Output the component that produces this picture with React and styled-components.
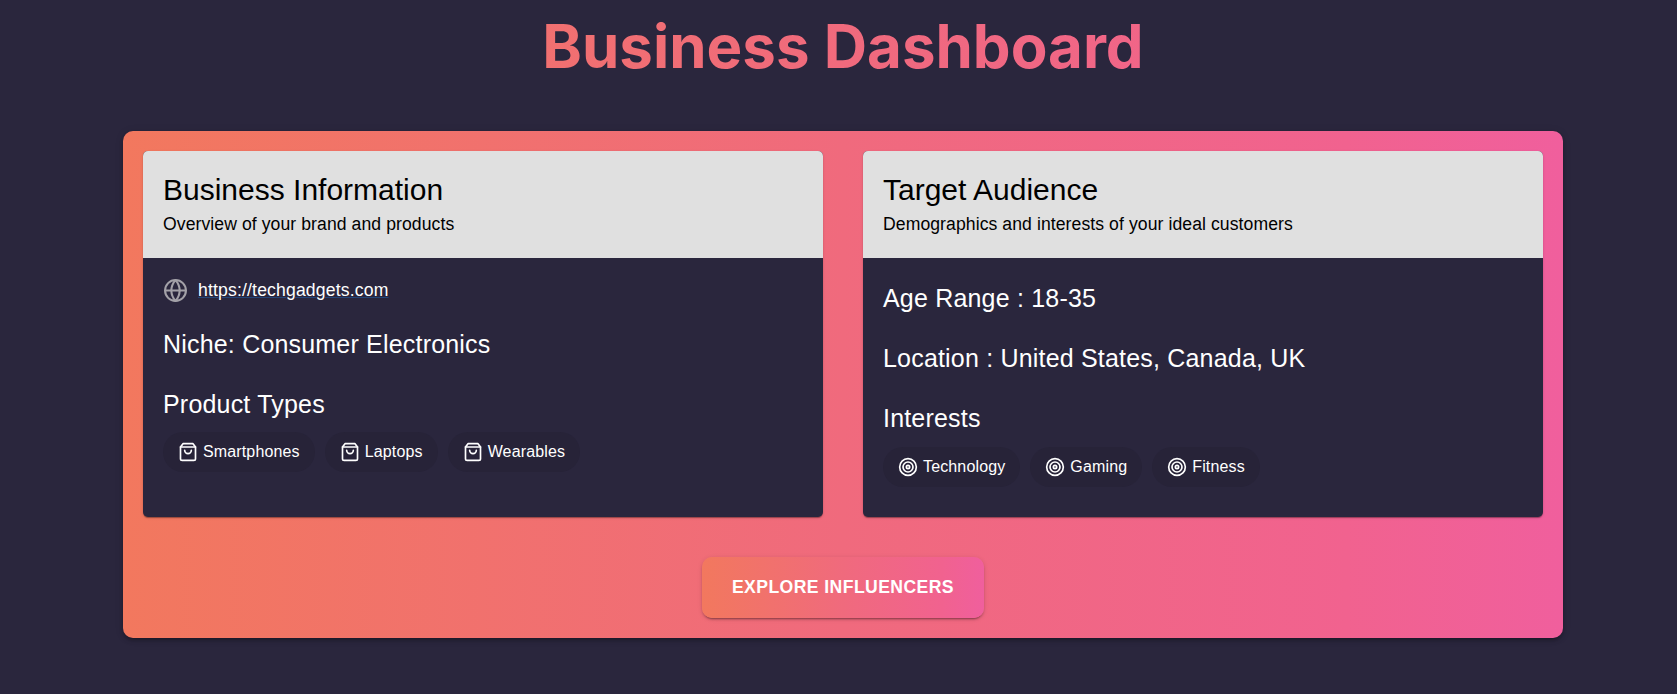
import React from "react";
import styled, { createGlobalStyle } from "styled-components";

const gradient = "linear-gradient(90deg, #f2785e 0%, #f06a7d 50%, #f1628f 85%, #f05f9d 100%)";
const sans = '"Liberation Sans", Arial, Helvetica, sans-serif';

const GlobalStyle = createGlobalStyle`
  *, *::before, *::after { box-sizing: border-box; }
  body { margin: 0; background: #2a263d; font-family: ${sans}; overflow: hidden; }
  h1, h2, h3, p { margin: 0; font-weight: 400; }
`;

const Page = styled.main`
  display: flex;
  flex-direction: column;
  align-items: center;
  width: 100%;
  min-height: 694px;
  padding: 10px 114px 56px 123px;
  background: #2a263d;
`;

const Title = styled.h1`
  width: 100%;
  height: 72px;
  margin-bottom: 49px;
  font-family: Inter, sans-serif;
  font-size: 60px;
  font-weight: 700;
  line-height: 72px;
  text-align: center;
  color: transparent;
  background: ${gradient};
  background-clip: text;
  -webkit-background-clip: text;
`;

const Panel = styled.section`
  display: flex;
  flex-direction: column;
  align-items: center;
  gap: 40px;
  width: 100%;
  height: 507px;
  padding: 20px;
  border-radius: 10px;
  background: ${gradient};
  box-shadow: 0 3px 3px -2px rgba(0, 0, 0, 0.2), 0 3px 4px rgba(0, 0, 0, 0.14), 0 1px 8px rgba(0, 0, 0, 0.12);
`;

const Cards = styled.div`
  display: grid;
  grid-template-columns: 1fr 1fr;
  gap: 40px;
  width: 100%;
  height: 366px;
`;

const Card = styled.article`
  overflow: hidden;
  border-radius: 5px;
  background: #2a263d;
  color: #fff;
  box-shadow: 0 2px 1px -1px rgba(0, 0, 0, 0.2), 0 1px 1px rgba(0, 0, 0, 0.14), 0 1px 3px rgba(0, 0, 0, 0.12);
`;

const CardHeader = styled.header`
  height: 107px;
  padding: 20px 20px 0;
  background: #e0e0e0;
  color: #000;
`;

const CardTitle = styled.h2`
  font-size: 30px;
  line-height: 38px;
`;

const CardSubtitle = styled.p`
  font-size: 17.6px;
  line-height: 30px;
  letter-spacing: 0.08px;
`;

const CardBody = styled.div`
  display: flex;
  flex-direction: column;
  gap: 20px;
  padding: 20px;
`;

const LinkRow = styled.div`
  display: flex;
  align-items: center;
  gap: 10px;
  height: 24px;
  margin-bottom: 2px;
  color: #a3a1a8;
`;

const SiteLink = styled.a`
  font-size: 17.6px;
  line-height: 24px;
  letter-spacing: 0.16px;
  color: #fff;
  text-decoration: underline;
  text-decoration-color: rgba(25, 118, 210, 0.4);
  text-decoration-thickness: 1px;
`;

const Fact = styled.h3`
  font-size: 25px;
  line-height: 40px;
  letter-spacing: 0.19px;
`;

const Chips = styled.div`
  display: flex;
  gap: 10px;
  margin-top: ${(p) => p.$offset}px;
`;

const Chip = styled.span`
  display: flex;
  align-items: center;
  gap: 5px;
  height: 40px;
  padding: 0 15px;
  border-radius: 20px;
  background: #272338;
  font-size: 16px;
  letter-spacing: 0.14px;
`;

const ExploreButton = styled.button`
  width: 282px;
  height: 61px;
  padding: 0;
  border: 0;
  border-radius: 10px;
  background: ${gradient};
  box-shadow: 0 3px 1px -2px rgba(0, 0, 0, 0.2), 0 2px 2px rgba(0, 0, 0, 0.14), 0 1px 5px rgba(0, 0, 0, 0.12);
  color: #fff;
  font-family: ${sans};
  font-size: 17.6px;
  font-weight: 700;
  letter-spacing: 0.42px;
  white-space: nowrap;
`;

const Svg = styled.svg`
  display: block;
  flex: none;
  width: ${(p) => p.$size}px;
  height: ${(p) => p.$size}px;
  fill: none;
  stroke: currentColor;
  stroke-width: 2;
  stroke-linecap: round;
  stroke-linejoin: round;
`;

const GlobeIcon = () => (
  <Svg $size={25} viewBox="0 0 24 24">
    <circle cx="12" cy="12" r="10" />
    <path d="M2 12h20" />
    <path d="M12 2a15.3 15.3 0 0 1 4 10 15.3 15.3 0 0 1-4 10 15.3 15.3 0 0 1-4-10 15.3 15.3 0 0 1 4-10z" />
  </Svg>
);

const BagIcon = () => (
  <Svg $size={20} viewBox="0 0 24 24">
    <path d="M6 2 3 6v14a2 2 0 0 0 2 2h14a2 2 0 0 0 2-2V6l-3-4z" />
    <path d="M3 6h18" />
    <path d="M16 10a4 4 0 0 1-8 0" />
  </Svg>
);

const TargetIcon = () => (
  <Svg $size={20} viewBox="0 0 24 24">
    <circle cx="12" cy="12" r="10" />
    <circle cx="12" cy="12" r="6" />
    <circle cx="12" cy="12" r="2" />
  </Svg>
);

const ChipGroup = ({ title, icon: Icon, items, offset }) => (
  <div>
    <Fact>{title}</Fact>
    <Chips $offset={offset}>
      {items.map((item) => (
        <Chip key={item}>
          <Icon />
          {item}
        </Chip>
      ))}
    </Chips>
  </div>
);

const InfoCard = ({ title, subtitle, children }) => (
  <Card>
    <CardHeader>
      <CardTitle>{title}</CardTitle>
      <CardSubtitle>{subtitle}</CardSubtitle>
    </CardHeader>
    <CardBody>{children}</CardBody>
  </Card>
);

export default function App() {
  return (
    <>
      <GlobalStyle />
      <Page>
        <Title>Business Dashboard</Title>
        <Panel>
          <Cards>
            <InfoCard title="Business Information" subtitle="Overview of your brand and products">
              <LinkRow>
                <GlobeIcon />
                <SiteLink href="#">https://techgadgets.com</SiteLink>
              </LinkRow>
              <Fact>Niche: Consumer Electronics</Fact>
              <ChipGroup
                title="Product Types"
                icon={BagIcon}
                items={["Smartphones", "Laptops", "Wearables"]}
                offset={8}
              />
            </InfoCard>
            <InfoCard title="Target Audience" subtitle="Demographics and interests of your ideal customers">
              <Fact>Age Range : 18-35</Fact>
              <Fact>Location : United States, Canada, UK</Fact>
              <ChipGroup
                title="Interests"
                icon={TargetIcon}
                items={["Technology", "Gaming", "Fitness"]}
                offset={9}
              />
            </InfoCard>
          </Cards>
          <ExploreButton>EXPLORE INFLUENCERS</ExploreButton>
        </Panel>
      </Page>
    </>
  );
}
